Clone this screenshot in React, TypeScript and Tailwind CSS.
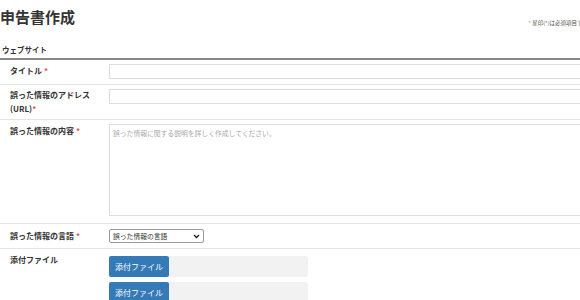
const font = {
  fontFamily: '"Noto Sans CJK JP", "Noto Sans", sans-serif',
};

function Req({ tight }: { tight?: boolean }) {
  return <span className={`text-[#d9534f] ${tight ? "" : "ml-[2px]"}`}>*</span>;
}

function Row({
  label,
  children,
  className,
}: {
  label: React.ReactNode;
  children: React.ReactNode;
  className: string;
}) {
  return (
    <div className={`flex border-b border-[#e4e4e4] ${className}`}>
      <div className="w-[109px] shrink-0 pl-[10px] text-[8px] font-bold leading-[14px] text-[#333]">
        {label}
      </div>
      <div className="flex-1">{children}</div>
    </div>
  );
}

export default function App() {
  return (
    <div className="h-[300px] w-[580px] overflow-hidden bg-white" style={font}>
      <div className="w-[640px]">
        <div className="flex items-start justify-between pt-[7px]">
          <h1 className="text-[15px] font-bold leading-[20px] text-[#333]">申告書作成</h1>
          <p className="mr-[52px] mt-[12px] text-[5.5px] leading-[8px] text-[#555]">
            <span className="text-[#d9534f]">*</span> 星印(*)は必須項目です
          </p>
        </div>
        <div className="mt-[17px] pl-[2px] text-[7.5px] font-bold leading-[12px] text-[#333]">
          ウェブサイト
        </div>
        <div className="mt-[2px] border-b-2 border-[#888]" />

        <Row label={<>タイトル<Req /></>} className="h-[25px] pt-[4px]">
          <div className="h-[15px] w-full border border-[#dcdcdc] bg-white" />
        </Row>

        <Row
          label={
            <>
              誤った情報のアドレス
              <br />
              (URL)<Req tight />
            </>
          }
          className="h-[35px] pt-[3px]"
        >
          <div className="mt-[1px] h-[15px] w-full border border-[#dcdcdc] bg-white" />
        </Row>

        <Row label={<>誤った情報の内容<Req /></>} className="h-[104px] pt-[4px]">
          <div className="h-[92px] w-full border border-[#dcdcdc] bg-white px-[3px] pt-[2px] text-[6.8px] leading-[12px] text-[#aaa]">
            誤った情報に関する説明を詳しく作成してください。
          </div>
        </Row>

        <Row label={<>誤った情報の言語<Req /></>} className="h-[25px] pt-[5px]">
          <div className="flex h-[14px] w-[95px] items-center justify-between rounded-[2px] border border-[#999] bg-white px-[3px] text-[6.8px] text-[#333]">
            <span>誤った情報の言語</span>
            <svg width="7" height="5" viewBox="0 0 7 5">
              <path d="M1 1l2.5 2.5L6 1" fill="none" stroke="#222" strokeWidth="1.4" />
            </svg>
          </div>
        </Row>

        <div className="flex pt-[4px]">
          <div className="w-[109px] shrink-0 pl-[10px] text-[8px] font-bold leading-[14px] text-[#333]">
            添付ファイル
          </div>
          <div className="flex flex-col gap-[5px] pt-[3px]">
            {[0, 1].map((i) => (
              <div key={i} className="flex h-[21px] w-[199px]">
                <div className="flex w-[60px] items-center justify-center rounded-[2px] bg-[#337ab7] text-[8px] text-white">
                  添付ファイル
                </div>
                <div className="flex-1 rounded-r-[3px] bg-[#f2f2f2]" />
              </div>
            ))}
          </div>
        </div>
      </div>
    </div>
  );
}
